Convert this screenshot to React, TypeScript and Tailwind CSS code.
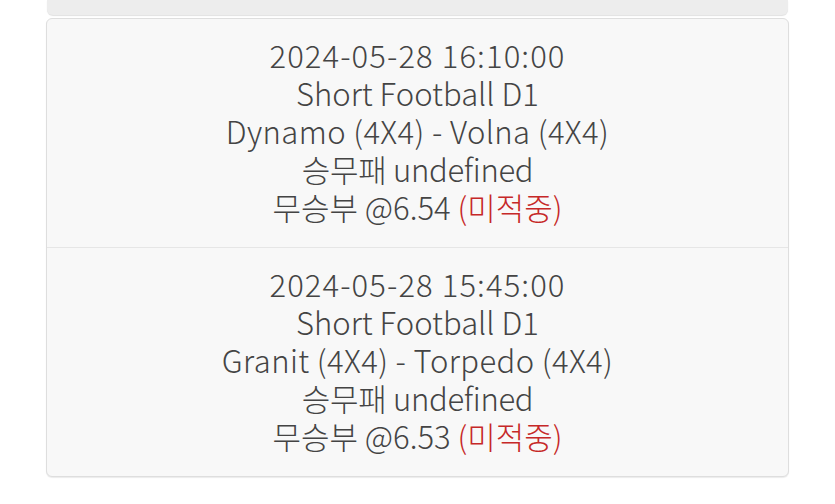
import React from "react";

const rows = [
  {
    time: "2024-05-28 16:10:00",
    league: "Short Football D1",
    match: "Dynamo (4X4) - Volna (4X4)",
    market: "승무패 undefined",
    pick: "무승부 @6.54",
  },
  {
    time: "2024-05-28 15:45:00",
    league: "Short Football D1",
    match: "Granit (4X4) - Torpedo (4X4)",
    market: "승무패 undefined",
    pick: "무승부 @6.53",
  },
];

export default function App() {
  return (
    <div
      className="w-[835px] h-[504px] bg-white overflow-hidden"
      style={{ fontFamily: '"Noto Sans CJK KR", "Noto Sans", sans-serif' }}
    >
      <div className="ml-[47px] w-[741px] h-[15px] bg-[#ededed] rounded-b-[6px] shadow-[0_1px_1px_rgba(0,0,0,0.12)]" />
      <div className="mt-[3px] ml-[46px] w-[743px] bg-[#f8f8f8] border border-[#dedede] rounded-[6px] shadow-[0_1px_1px_rgba(0,0,0,0.08)]">
        {rows.map((r, i) => (
          <div
            key={i}
            className={
              "flex flex-col items-center pt-[17px] pb-[21px] text-[31px] font-light leading-[38px] text-[#444444] " +
              (i > 0 ? "border-t border-[#e6e6e6]" : "")
            }
          >
            <div className="tracking-[1.1px]">{r.time}</div>
            <div>{r.league}</div>
            <div className="tracking-[0.4px]">{r.match}</div>
            <div className="tracking-[-0.3px]">{r.market}</div>
            <div>
              {r.pick} <span className="text-[#c62828]">(미적중)</span>
            </div>
          </div>
        ))}
      </div>
    </div>
  );
}
